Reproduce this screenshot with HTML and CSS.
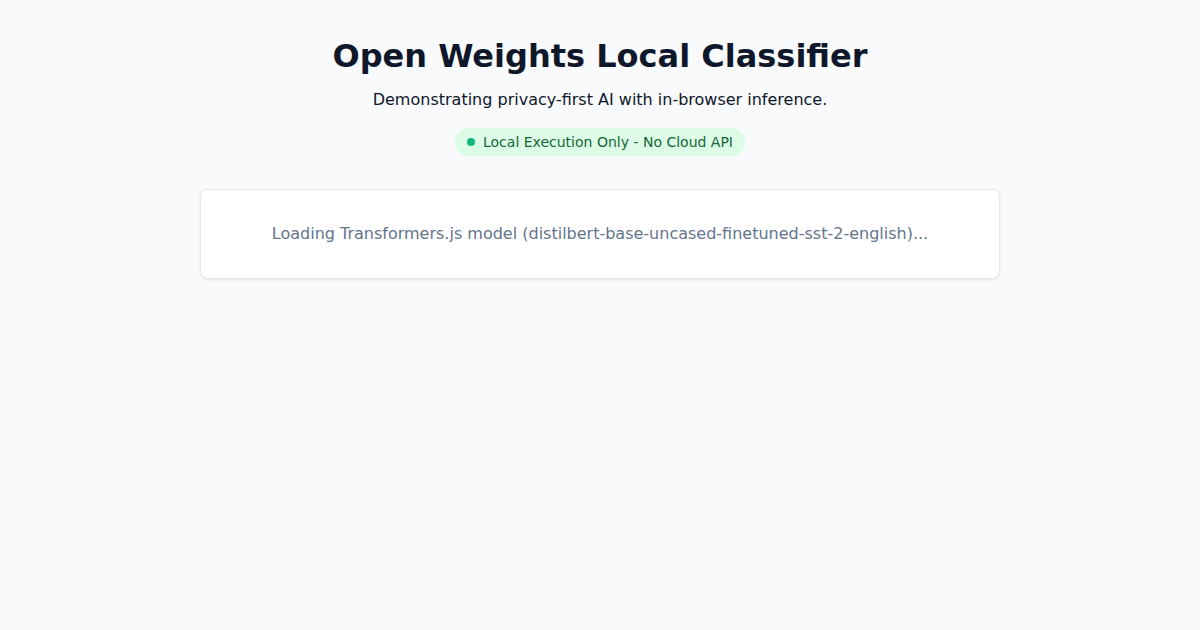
FILE: index.html
```html
<!DOCTYPE html>
<html lang="en">
<head>
<meta charset="utf-8">
<title>Open Weights Local Classifier</title>
<link rel="stylesheet" href="styles.css">
</head>
<body>
<main class="container">
  <header class="header">
    <h1 class="title">Open Weights Local Classifier</h1>
    <p class="subtitle">Demonstrating privacy-first AI with in-browser inference.</p>
    <div class="badge"><span class="dot"></span><span>Local Execution Only - No Cloud API</span></div>
  </header>
  <section class="card">
    <p class="loading">Loading Transformers.js model (distilbert-base-uncased-finetuned-sst-2-english)...</p>
  </section>
</main>
</body>
</html>
```
FILE: styles.css
```css
html, body {
  margin: 0;
  padding: 0;
  background: #f8fafc;
  font-family: "DejaVu Sans", sans-serif;
  color: #0f172a;
}
.container {
  max-width: 800px;
  margin: 0 auto;
  padding: 37px 0 32px;
}
.header {
  display: flex;
  flex-direction: column;
  align-items: center;
  text-align: center;
}
.title {
  margin: 0;
  font-size: 32px;
  line-height: 38px;
  font-weight: 700;
  color: #0f172a;
}
.subtitle {
  margin: 13px 0 0;
  font-size: 16px;
  line-height: 24px;
  color: #0f172a;
}
.badge {
  margin-top: 16px;
  display: inline-flex;
  align-items: center;
  gap: 8px;
  padding: 4px 12px;
  border-radius: 999px;
  background: #dcfce7;
  color: #166534;
  font-size: 14px;
  line-height: 20px;
}
.dot {
  width: 8px;
  height: 8px;
  border-radius: 50%;
  background: #10b981;
}
.card {
  margin-top: 33px;
  background: #ffffff;
  border: 1px solid #e2e8f0;
  border-radius: 8px;
  box-shadow: 0 1px 3px rgba(0,0,0,0.1);
  padding: 32px;
  text-align: center;
}
.loading {
  margin: 0;
  font-size: 16px;
  line-height: 24px;
  color: #64748b;
}
```
